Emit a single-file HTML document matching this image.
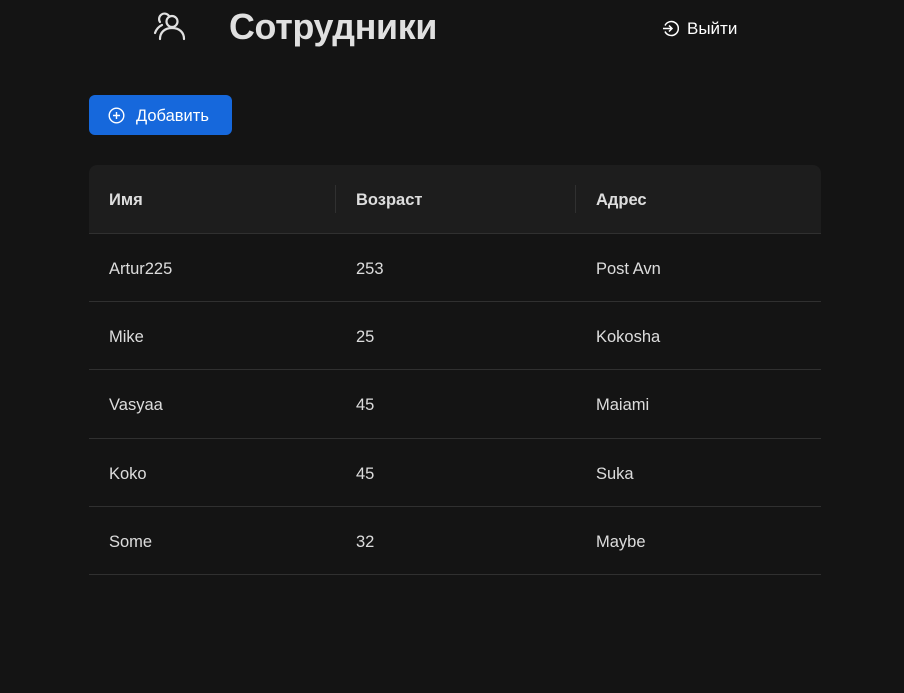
<!DOCTYPE html>
<html><head><meta charset="utf-8"><style>
body{margin:0;background:#141414;width:904px;height:693px;overflow:hidden;font-family:"Liberation Sans",sans-serif;color:rgba(255,255,255,.85);position:relative}
.abs{position:absolute}
.title{left:229px;top:5px;font-size:35.8px;font-weight:bold;color:#e0e0e0;line-height:44px;letter-spacing:-0.3px}
.logout{left:662px;top:18px;font-size:17px;color:#fff;line-height:22px}
.btn{left:89px;top:95px;width:143px;height:40px;background:#1668dc;border-radius:6px;color:#fff;font-size:16.5px;line-height:42px}
table{position:absolute;left:89px;top:165px;width:732px;border-collapse:collapse;font-size:16.5px}
th{background:#1d1d1d;text-align:left;font-weight:bold;height:68px;box-sizing:border-box;padding:3px 20px 0;position:relative;border-bottom:1px solid #303030}
th:first-child{border-top-left-radius:8px}th:last-child{border-top-right-radius:8px}
th+th:before{content:"";position:absolute;left:-1px;top:20px;height:28px;width:1px;background:#303030}
td{height:68.4px;box-sizing:border-box;padding:4px 20px 0;border-bottom:1px solid #303030}
</style></head><body>
<svg class="abs" style="left:150px;top:6px" width="36" height="36" viewBox="0 0 36 36" fill="none" stroke="#e0e0e0" stroke-width="2.2" stroke-linecap="round"><circle cx="22" cy="15.5" r="5.5"/><path d="M10 33c0-7 5-11 12-11s12 4 12 11"/><path d="M10 16a5 5 0 1 1 9-6"/><path d="M5 27c1-3 3-6 7-8"/></svg>
<div class="abs title">Сотрудники</div>
<div class="abs logout"><svg style="vertical-align:-3px;margin-right:8px" width="17" height="17" viewBox="0 0 17 17" fill="none" stroke="#fff" stroke-width="1.5"><path d="M3 5.5A7 7 0 1 1 3 11.5"/><path d="M1 8.5h9M7 5.5l3 3-3 3"/></svg>Выйти</div>
<div class="abs btn"><svg style="position:absolute;left:19px;top:12px" width="17" height="17" viewBox="0 0 17 17" fill="none" stroke="#fff" stroke-width="1.4"><circle cx="8.5" cy="8.5" r="7.3"/><path d="M8.5 5v7M5 8.5h7"/></svg><span style="position:absolute;left:47px">Добавить</span></div>
<table>
<colgroup><col style="width:247px"><col style="width:240px"><col></colgroup>
<tr><th>Имя</th><th>Возраст</th><th>Адрес</th></tr>
<tr><td>Artur225</td><td>253</td><td>Post Avn</td></tr>
<tr><td>Mike</td><td>25</td><td>Kokosha</td></tr>
<tr><td>Vasyaa</td><td>45</td><td>Maiami</td></tr>
<tr><td>Koko</td><td>45</td><td>Suka</td></tr>
<tr><td>Some</td><td>32</td><td>Maybe</td></tr>
</table>
</body></html>
